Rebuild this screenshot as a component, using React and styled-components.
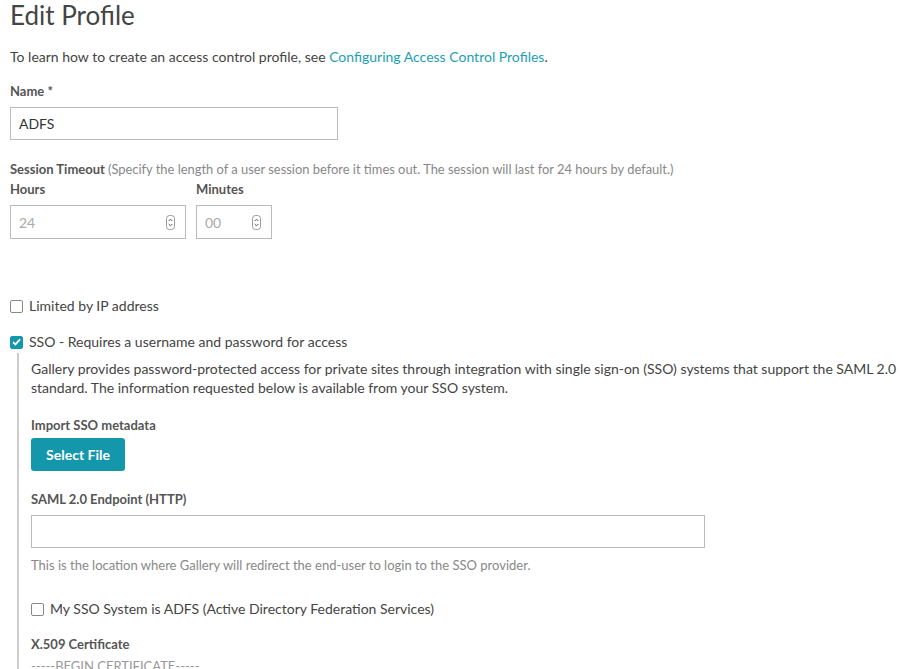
import React from 'react';
import styled, { createGlobalStyle } from 'styled-components';

const GlobalStyle = createGlobalStyle`
  html, body {
    margin: 0;
    background: #fff;
    font-family: Lato, "Open Sans", sans-serif;
    color: #444;
  }
`;

const Page = styled.div`
  padding: 0 0 0 10px;
  width: 900px;
  height: 669px;
  box-sizing: border-box;
  overflow: hidden;
`;

const Title = styled.h1`
  margin: 0;
  font-size: 26px;
  font-weight: 400;
  line-height: 30px;
  color: #444;
`;

const Intro = styled.p`
  margin: 17px 0 0;
  font-size: 14px;
  line-height: 20px;
  color: #444;

  a {
    color: #1ba0b5;
    text-decoration: none;
  }
`;

const Label = styled.div`
  margin-top: ${({ $top }) => $top ?? 14}px;
  font-size: 13px;
  font-weight: 700;
  line-height: 16px;
  color: #555;
`;

const Hint = styled.span`
  font-weight: 400;
  font-size: 12.9px;
  color: #888;
`;

const TextInput = styled.div`
  margin-top: 8px;
  width: ${({ $w }) => $w}px;
  height: 33px;
  box-sizing: border-box;
  border: 1px solid #bbb;
  display: flex;
  align-items: center;
  padding: 0 8px;
  font-size: 14px;
  color: #333;
`;

const TimeRow = styled.div`
  display: flex;
  gap: 10px;
`;

const TimeField = styled.div`
  display: flex;
  flex-direction: column;
`;

const NumberInput = styled.div`
  margin-top: 8px;
  width: ${({ $w }) => $w}px;
  height: 34px;
  box-sizing: border-box;
  border: 1px solid #bbb;
  display: flex;
  align-items: center;
  justify-content: space-between;
  padding: 0 10px 0 8px;
  font-size: 14px;
  color: #aaa;
`;

const CheckRow = styled.label`
  display: flex;
  align-items: center;
  gap: 6px;
  margin-top: ${({ $top }) => $top}px;
  font-size: 14px;
  line-height: 18px;
  color: #444;
`;

const Box = styled.span`
  width: 13px;
  height: 13px;
  box-sizing: border-box;
  border-radius: 2px;
  border: 1px solid ${({ $on }) => ($on ? '#1597ab' : '#888')};
  background: ${({ $on }) => ($on ? '#1597ab' : '#fff')};
  display: inline-flex;
  align-items: center;
  justify-content: center;
  flex-shrink: 0;
`;

const SsoSection = styled.div`
  margin-left: 7px;
  margin-top: 2px;
  border-left: 2px solid #ccc;
  padding: 6px 0 40px 12px;
`;

const Body = styled.p`
  margin: 0;
  font-size: 14px;
  line-height: 19px;
  color: #444;
`;

const Button = styled.button`
  margin-top: 5px;
  width: 94px;
  height: 33px;
  border: 0;
  border-radius: 3px;
  background: #1597ab;
  color: #fff;
  font-family: inherit;
  font-size: 14px;
  font-weight: 700;
  padding: 0;
`;

const Help = styled.div`
  margin-top: 9px;
  font-size: 13px;
  line-height: 16px;
  color: #888;
`;

const Cert = styled.div`
  margin-top: 6px;
  font-size: 13px;
  line-height: 16px;
  color: #999;
`;

const Spinner = () => (
  <svg width="9" height="15" viewBox="0 0 9 15">
    <rect x="0.5" y="0.5" width="8" height="14" rx="3" fill="none" stroke="#999" />
    <path d="M2.7 6 L4.5 4.2 L6.3 6" fill="none" stroke="#555" strokeWidth="1" />
    <path d="M2.7 9 L4.5 10.8 L6.3 9" fill="none" stroke="#555" strokeWidth="1" />
  </svg>
);

const Check = ({ on }) => (
  <Box $on={on}>
    {on && (
      <svg width="9" height="8" viewBox="0 0 9 8">
        <path d="M1 4.2 L3.4 6.4 L8 1.4" fill="none" stroke="#fff" strokeWidth="1.8" />
      </svg>
    )}
  </Box>
);

const App = () => (
  <Page>
    <GlobalStyle />
    <Title>Edit Profile</Title>
    <Intro>
      To learn how to create an access control profile, see{' '}
      <a href="#">Configuring Access Control Profiles</a>.
    </Intro>

    <Label $top={16}>Name *</Label>
    <TextInput $w={328}>ADFS</TextInput>

    <Label $top={21}>
      Session Timeout{' '}
      <Hint>
        (Specify the length of a user session before it times out. The session will last for 24 hours by default.)
      </Hint>
    </Label>
    <TimeRow>
      <TimeField>
        <Label $top={4}>Hours</Label>
        <NumberInput $w={176}>
          24 <Spinner />
        </NumberInput>
      </TimeField>
      <TimeField>
        <Label $top={4}>Minutes</Label>
        <NumberInput $w={76}>
          00 <Spinner />
        </NumberInput>
      </TimeField>
    </TimeRow>

    <CheckRow $top={58}>
      <Check /> Limited by IP address
    </CheckRow>
    <CheckRow $top={18}>
      <Check on /> SSO - Requires a username and password for access
    </CheckRow>

    <SsoSection>
      <Body>
        Gallery provides password-protected access for private sites through integration with single sign-on (SSO)
        systems that support the SAML 2.0 standard. The information requested below is available from your SSO system.
      </Body>
      <Label $top={20}>Import SSO metadata</Label>
      <Button>Select File</Button>
      <Label $top={20}>SAML 2.0 Endpoint (HTTP)</Label>
      <TextInput $w={674} />
      <Help>This is the location where Gallery will redirect the end-user to login to the SSO provider.</Help>
      <CheckRow $top={27}>
        <Check /> My SSO System is ADFS (Active Directory Federation Services)
      </CheckRow>
      <Label $top={18}>X.509 Certificate</Label>
      <Cert>-----BEGIN CERTIFICATE-----</Cert>
    </SsoSection>
  </Page>
);

export default App;
